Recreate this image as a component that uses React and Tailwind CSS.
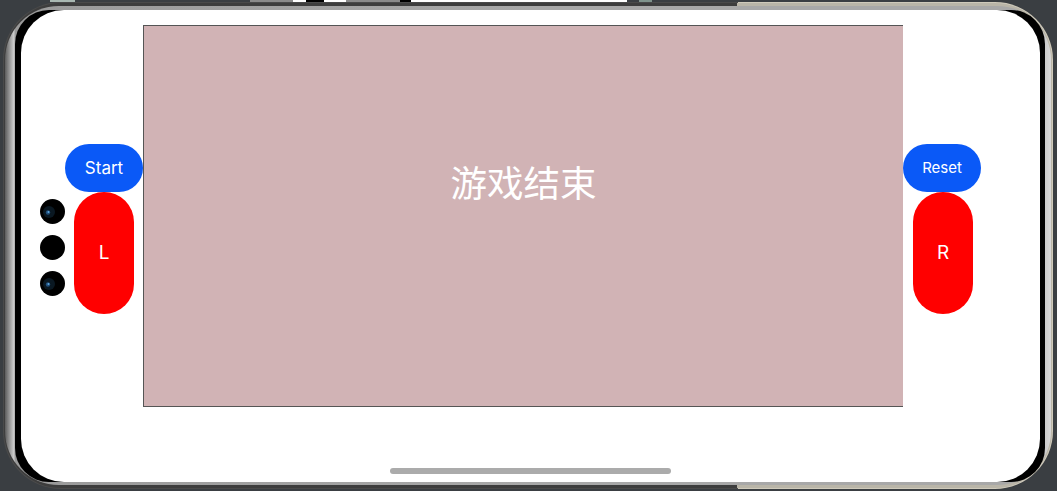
import React from "react";

const Lens = ({ glint }) => (
	<svg width="25" height="25" viewBox="0 0 25 25" className="block">
		<circle cx="12.5" cy="12.5" r="12.5" fill="#000" />
		{glint && <circle cx="9" cy="13" r="6" fill="#0a1822" />}
		{glint && <circle cx="8" cy="13.5" r="2.2" fill="#1f4f7c" />}
		{glint && <circle cx="8.5" cy="13" r="1" fill="#5fa6dc" />}
	</svg>
);

const Pill = ({ children }) => (
	<div className="w-[60px] h-[122px] rounded-[30px] bg-[#ff0000] flex items-center justify-center text-white text-[19px] font-['Inter','Noto_Sans',sans-serif]">
		{children}
	</div>
);

const TopButton = ({ children, small }) => (
	<div
		className={
			small
				? "w-[78px] h-[48px] pt-[1px] rounded-[24px] bg-[#0a59f7] flex items-center justify-center text-white text-[15px] font-['Inter','Noto_Sans',sans-serif]"
				: "w-[78px] h-[48px] pt-[1px] rounded-[24px] bg-[#0a59f7] flex items-center justify-center text-white text-[17px] font-['Inter','Noto_Sans',sans-serif]"
		}
	>
		{children}
	</div>
);

export default function App() {
	return (
		<div className="w-[1057px] h-[491px] overflow-hidden bg-[#3a3e42] flex flex-col">
			{/* bits of the window behind the phone, top edge */}
			<div className="h-[2px] shrink-0 flex">
				<div className="w-[50px] bg-[#3a3e42]" />
				<div className="w-[25px] bg-[#a9b8b2]" />
				<div className="w-[175px] bg-[#3a3e42]" />
				<div className="w-[43px] bg-[#8a8a8a]" />
				<div className="w-[13px] bg-white" />
				<div className="w-[18px] bg-black" />
				<div className="w-[22px] bg-white" />
				<div className="w-[54px] bg-[#8a8a8a]" />
				<div className="w-[11px] bg-black" />
				<div className="w-[216px] bg-white" />
				<div className="w-[12px] bg-[#3a3e42]" />
				<div className="w-[13px] bg-[#7f938c]" />
			</div>
			<div className="flex-1 min-h-0 pl-[3px] pr-[4px] pb-[2px]">
				{/* outer metal edge, beige on the right part */}
				<div className="w-full h-full rounded-[58px] p-[1px] bg-[linear-gradient(90deg,#4a4a4a_0,#4a4a4a_735px,#cfcabb_735px,#cfcabb_100%)]">
					<div className="w-full h-full rounded-[57px] pt-[3px] pb-[3px] px-[1px] bg-[linear-gradient(90deg,#3d3d3d_0,#3d3d3d_733px,#b9b5a8_733px,#b9b5a8_100%)]">
						<div className="w-full h-full rounded-[54px] pt-[4px] pb-[3px] pl-[10px] pr-[6px] bg-[linear-gradient(90deg,#5c5c5c_0,#d0d0d0_9px,#9a9a9a_10px,#a8a8a8_50%,#a8a8a8_98%,#d8d8d8_100%)]">
							<div className="w-full h-full rounded-[34px] bg-black pl-[6px] pr-[5px]">
								{/* screen */}
								<div className="w-full h-full rounded-[43px] bg-white flex flex-col items-center pt-[15px]">
									<div className="w-full flex h-[382px]">
										<div className="w-[122px] flex flex-col items-end pt-[119px]">
											<TopButton>Start</TopButton>
											<div className="flex gap-[9px] mr-[9px]">
												<div className="flex flex-col gap-[11px] pt-[7px]">
													<Lens glint />
													<Lens />
													<Lens glint />
												</div>
												<Pill>L</Pill>
											</div>
										</div>
										<div className="w-[760px] h-[382px] border border-r-0 border-[#555555] bg-[#d1b3b5] flex justify-center pt-[131px]">
											<span className="text-white text-[36.5px] leading-[50px] h-[50px] font-['Noto_Sans_CJK_SC',sans-serif]">游戏结束</span>
										</div>
										<div className="flex-1 flex flex-col items-start pt-[119px]">
											<TopButton small>Reset</TopButton>
											<div className="ml-[10px]">
												<Pill>R</Pill>
											</div>
										</div>
									</div>
									<div className="w-[281px] h-[6px] mt-[61px] rounded-full bg-[#ababab]" />
								</div>
							</div>
						</div>
					</div>
				</div>
			</div>
		</div>
	);
}
